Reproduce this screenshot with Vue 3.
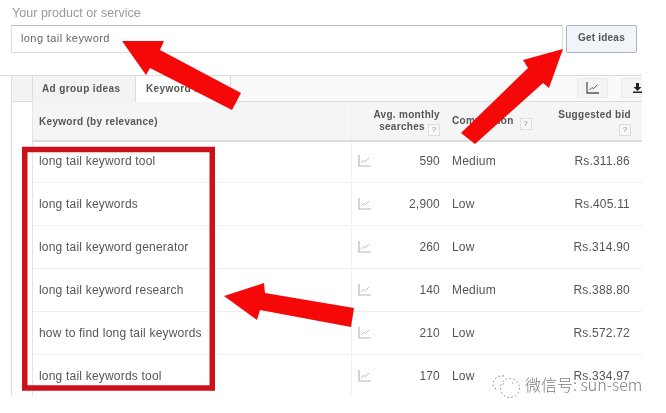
<script setup>
const rows = [
  { kw: 'long tail keyword tool', vol: '590', comp: 'Medium', bid: 'Rs.311.86' },
  { kw: 'long tail keywords', vol: '2,900', comp: 'Low', bid: 'Rs.405.11' },
  { kw: 'long tail keyword generator', vol: '260', comp: 'Low', bid: 'Rs.314.90' },
  { kw: 'long tail keyword research', vol: '140', comp: 'Medium', bid: 'Rs.388.80' },
  { kw: 'how to find long tail keywords', vol: '210', comp: 'Low', bid: 'Rs.572.72' },
  { kw: 'long tail keywords tool', vol: '170', comp: 'Low', bid: 'Rs.334.97' },
]
</script>

<template>
  <div class="page">
    <div class="search">
      <div class="label">Your product or service</div>
      <div class="search-row">
        <div class="input">long tail keyword</div>
        <div class="btn">Get ideas</div>
      </div>
    </div>

    <div class="panel">
      <div class="tabbar">
        <div class="tab-gutter"></div>
        <div class="tab tab-off">Ad group ideas</div>
        <div class="tab tab-on">Keyword ideas</div>
        <div class="tools">
          <div class="tool">
            <svg width="13" height="12" viewBox="0 0 13 12" fill="none" stroke="#555" stroke-width="1.3">
              <path d="M1 0v11h12" />
              <path d="M3.500 8l2.500-2.500 1.500 1.200 4-4" stroke-width="1" />
            </svg>
          </div>
          <div class="tool tool-cut">
            <svg width="9" height="10" viewBox="0 0 9 10">
              <path d="M3 0h3v4h2.500L4.500 8 .5 4H3z M0 8.500h9V10H0z" fill="#222" />
            </svg>
          </div>
        </div>
      </div>

      <div class="body">
        <div class="grid head">
          <div class="c-kw th">Keyword (by relevance)</div>
          <div class="c-ic"></div>
          <div class="c-vol th">Avg. monthly<br />searches <span class="q">?</span></div>
          <div class="c-comp th">Competition <span class="q q-gap">?</span></div>
          <div class="c-bid th">Suggested bid<br /><span class="q">?</span></div>
        </div>

        <div v-for="r in rows" :key="r.kw" class="grid row">
          <div class="c-kw">{{ r.kw }}</div>
          <div class="c-ic">
            <svg width="13" height="12" viewBox="0 0 13 12" fill="none" stroke="#b4b8bb" stroke-width="1.2">
              <path d="M1 0v11h12" />
              <path d="M3 8l2.500-2.500 2 1.200 3.500-3.700" stroke-width="0.9" />
            </svg>
          </div>
          <div class="c-vol">{{ r.vol }}</div>
          <div class="c-comp">{{ r.comp }}</div>
          <div class="c-bid">{{ r.bid }}</div>
        </div>
      </div>
    </div>

    <svg class="marks" width="666" height="413" viewBox="0 0 666 413">
      <rect x="24.750" y="149.500" width="187.500" height="238.500" fill="none" stroke="#cc1218" stroke-width="5.500" />
      <polygon fill="#f40808" points="122,41 164,41 160,50 241,93 232,110 150,68 146,75" />
      <polygon fill="#f40808" points="563,49 523,60 528,68 461,133 475,144 543,83 549,88" />
      <polygon fill="#f40808" points="224,296 264,283 265,293 354,308 351,327 260,310 257,320" />
    </svg>

    <div class="watermark">
      <svg width="28" height="23" viewBox="0 0 28 23" fill="none" stroke="#808080" stroke-width="1" stroke-dasharray="1.500 2.500">
        <path d="M12 1C6 0 1 4 1 9c0 2 1 4 3 5" />
        <circle cx="18" cy="13" r="9.500" />
        <path d="M11 9h1M20 8h1" stroke-dasharray="none" />
      </svg>
      <span class="wm-text">微信号: sun-sem</span>
    </div>
  </div>
</template>

<style>
html, body { margin: 0; background: #fff; }
</style>

<style scoped>
.page {
  position: relative;
  width: 666px;
  height: 413px;
  overflow: hidden;
  background: #fff;
  font-family: "Liberation Sans", Arial, sans-serif;
  color: #555;
  filter: blur(0.35px);
}
.search { padding: 6px 0 0 11px; width: 626px; }
.label { font-size: 12.5px; line-height: 14px; color: #999; letter-spacing: 0.03px; padding-left: 1px; }
.search-row { display: flex; gap: 3px; margin-top: 5px; height: 28px; }
.input {
  flex: 1;
  box-sizing: border-box;
  border: 1px solid #dcdfe2;
  border-top-color: #bcc0c4;
  padding-left: 9px;
  font-size: 11px;
  line-height: 24px;
  letter-spacing: 0.4px;
  color: #666;
}
.btn {
  box-sizing: border-box;
  width: 71px;
  border: 1px solid #a9b5c2;
  border-radius: 2px;
  background: #f1f4f9;
  text-align: center;
  font-size: 10px;
  font-weight: bold;
  line-height: 24px;
  letter-spacing: 0.2px;
  color: #555;
}
.panel { margin-top: 22px; width: 642px; border-top: 1px solid #dcdcdc; }
.tabbar {
  display: flex;
  box-sizing: border-box;
  height: 26px;
  margin-left: 11px;
  background: #f9f9f9;
  border-bottom: 1px solid #dcdcdc;
  border-left: 1px solid #dcdcdc;
}
.tab-gutter { width: 20px; background: #f3f3f3; }
.tab {
  box-sizing: border-box;
  height: 26px;
  font-size: 10px;
  font-weight: bold;
  line-height: 25px;
  letter-spacing: 0.4px;
  color: #555;
  border-left: 1px solid #dcdcdc;
}
.tab-off { width: 103px; padding-left: 9px; background: #f3f3f3; }
.tab-on { width: 96px; padding-left: 10px; background: #fff; border-right: 1px solid #dcdcdc; white-space: nowrap; overflow: hidden; }
.tools { margin-left: auto; display: flex; gap: 13px; padding-top: 2px; }
.tool {
  box-sizing: border-box;
  width: 31px;
  height: 20px;
  background: #f4f4f4;
  border: 1px solid #ebebeb;
  border-radius: 2px;
  display: flex;
  align-items: center;
  justify-content: center;
}
.tool-cut { width: 21px; border-right: 0; justify-content: flex-start; padding-left: 11px; }
.body {
  box-sizing: border-box;
  width: 631px;
  margin-left: 11px;
  padding-left: 20px;
  border-left: 1px solid #dcdcdc;
}
.grid {
  display: grid;
  grid-template-columns: 318px 21px 68px 1fr 92px;
  align-items: center;
  box-sizing: border-box;
  border-left: 1px solid #e4e4e4;
}
.head { height: 40px; padding-top: 2px; background: #f5f5f5; border-bottom: 2px solid #dcdcdc; }
.row {
  height: 43px;
  padding-bottom: 1px;
  border-bottom: 1px solid #eeeeee;
  font-size: 12px;
  letter-spacing: 0.2px;
  color: #555;
}
.head + .row { height: 41px; padding-bottom: 2px; }
.row:last-child { border-bottom: 0; height: 41px; padding-bottom: 0; }
.c-kw { padding-left: 6px; }
.c-ic { align-self: stretch; border-left: 1px solid #f0f0f0; display: flex; align-items: center; padding-left: 6px; }
.c-comp { padding-left: 12px; }
.c-vol { text-align: right; }
.c-bid { text-align: right; padding-right: 12px; }
.th { font-size: 10px; font-weight: bold; line-height: 12px; letter-spacing: 0.3px; color: #555; white-space: nowrap; }
.th.c-bid { padding-right: 11px; }
.q {
  display: inline-block;
  box-sizing: border-box;
  width: 12px;
  height: 12px;
  border: 1px solid #ddd;
  background: #f8f8f8;
  text-align: center;
  font-size: 8px;
  font-weight: normal;
  line-height: 10px;
  color: #888;
  vertical-align: -2px;
}
.q-gap { margin-left: 3px; }
.marks { position: absolute; left: 0; top: 0; pointer-events: none; }
.watermark {
  position: absolute;
  left: 492px;
  top: 373px;
  display: flex;
  align-items: center;
  gap: 5px;
}
.wm-text {
  font-family: "Noto Sans CJK SC", "Liberation Sans", sans-serif;
  font-size: 16px;
  font-weight: 300;
  line-height: 22px;
  padding-bottom: 4px;
  color: rgba(100, 100, 100, 0.85);
}
</style>
